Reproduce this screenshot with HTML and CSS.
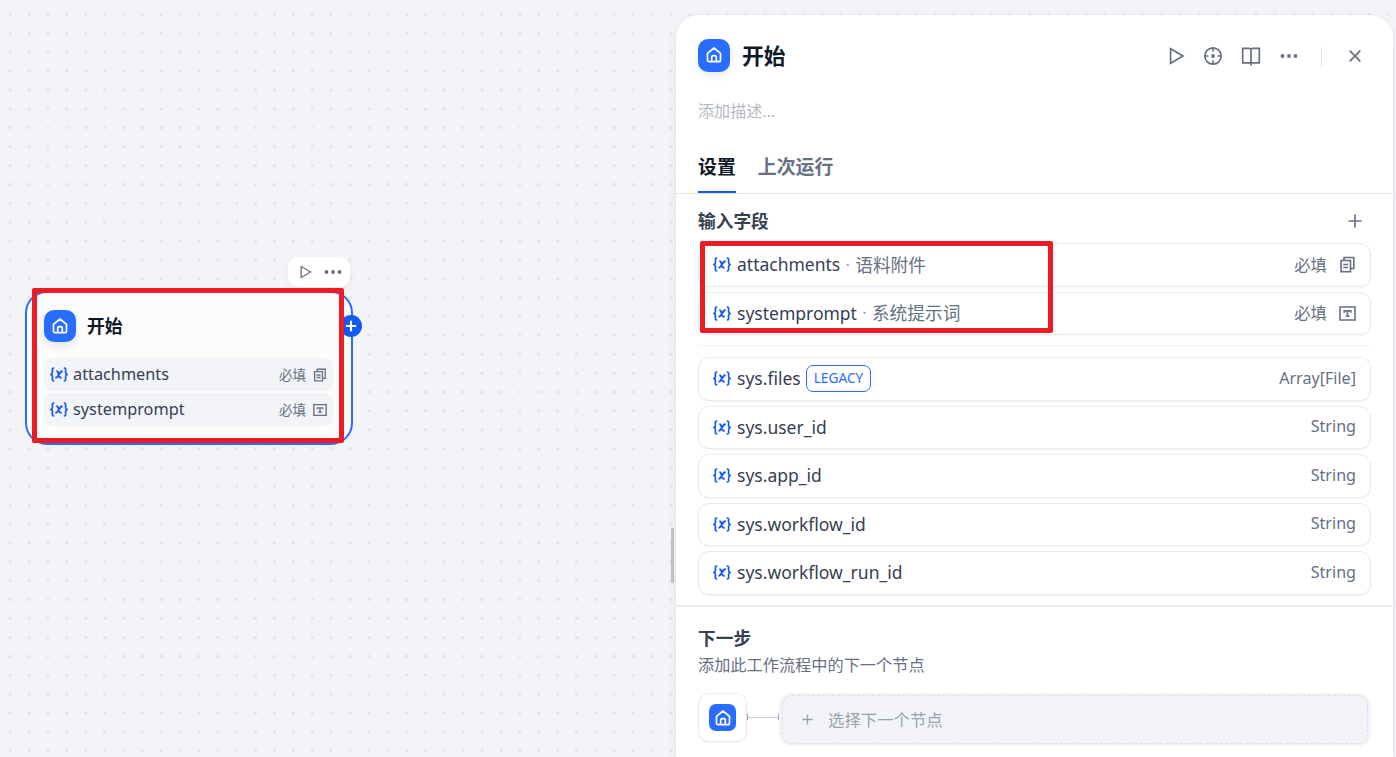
FILE: index.html
```html
<!DOCTYPE html>
<html lang="zh-CN">
<head>
    <meta charset="UTF-8">
    <title>开始</title>
    <link rel="stylesheet" href="styles.css">
</head>
<body>
    <!-- Shared icons -->
    <svg class="icon-defs" width="0" height="0">
        <symbol id="home" viewBox="0 0 16 16">
            <path d="M1.5 6.400 8 1l6.500 5.400v6.600a1.700 1.700 0 0 1-1.700 1.700H3.200a1.700 1.700 0 0 1-1.700-1.700zM5.700 14.500V10a1.300 1.300 0 0 1 1.300-1.300h2a1.300 1.300 0 0 1 1.300 1.300v4.500" fill="none" stroke="currentColor" stroke-width="1.700" stroke-linejoin="round"/>
        </symbol>
        <symbol id="var" viewBox="0 0 18 15">
            <path d="M4.300 1H3.700C2.800 1 2.400 1.500 2.400 2.300v3.200c0 1-.5 1.600-1.500 2 1 .4 1.500 1 1.500 2v3.200c0 .8.4 1.300 1.300 1.300h.6M13.700 1h.6c.9 0 1.300.5 1.300 1.300v3.200c0 1 .5 1.600 1.500 2-1 .4-1.500 1-1.500 2v3.200c0 .8-.4 1.300-1.300 1.300h-.6" fill="none" stroke="currentColor" stroke-width="1.700"/>
            <path d="M6.300 4.300h.4c.8 0 1.100.3 1.300 1l1.300 4.300c.2.800.6 1.100 1.300 1.100h1M12.700 4.300h-.2c-.9 0-1.500.3-2.100 1.100L7.700 9.500c-.6.900-1.200 1.200-2.100 1.200h-.2" fill="none" stroke="currentColor" stroke-width="1.900"/>
        </symbol>
        <symbol id="play" viewBox="0 0 16 18">
            <path d="M1.600 1.700v14.600L14 9z" fill="none" stroke="currentColor" stroke-width="1.700"/>
        </symbol>
        <symbol id="more" viewBox="0 0 18 6">
            <circle cx="2.500" cy="3" r="1.900" fill="currentColor"/>
            <circle cx="9" cy="3" r="1.900" fill="currentColor"/>
            <circle cx="15.500" cy="3" r="1.900" fill="currentColor"/>
        </symbol>
        <symbol id="plus" viewBox="0 0 14 14">
            <path d="M7 .5v13M.5 7h13" fill="none" stroke="currentColor" stroke-width="1.700"/>
        </symbol>
        <symbol id="plus-bold" viewBox="0 0 14 14">
            <path d="M7 1v12M1 7h12" fill="none" stroke="currentColor" stroke-width="2.500"/>
        </symbol>
        <symbol id="files" viewBox="0 0 16 17">
            <path d="M1.500 4.500h9.500v11.200H1.500zM4.500 4.500v-3h9.800v11H11M3.800 8.500h4.900M3.800 11.500h4.900" fill="none" stroke="currentColor" stroke-width="1.600"/>
        </symbol>
        <symbol id="text" viewBox="0 0 17 16">
            <path d="M1 1.500h15v13H1zM5.200 7.200V5.400h6.600v1.800M8.500 5.400v5.300M6.600 10.700h3.800" fill="none" stroke="currentColor" stroke-width="1.600"/>
        </symbol>
    </svg>

    <div class="workflow">
        <!-- Canvas -->
        <div class="canvas">
            <div class="node-toolbar">
                <svg class="tool-play"><use href="#play"/></svg>
                <svg class="tool-more"><use href="#more"/></svg>
            </div>
            <div class="node">
                <div class="node-header">
                    <div class="block-icon"><svg><use href="#home"/></svg></div>
                    <div class="node-title">开始</div>
                </div>
                <div class="node-var">
                    <svg class="var-icon"><use href="#var"/></svg>
                    <span class="node-var-name">attachments</span>
                    <span class="node-required">必填</span>
                    <svg class="type-icon"><use href="#files"/></svg>
                </div>
                <div class="node-var">
                    <svg class="var-icon"><use href="#var"/></svg>
                    <span class="node-var-name">systemprompt</span>
                    <span class="node-required">必填</span>
                    <svg class="type-icon"><use href="#text"/></svg>
                </div>
                <div class="node-handle"><svg><use href="#plus-bold"/></svg></div>
            </div>
            <div class="mark mark-node"></div>
            <div class="resize-bar"></div>
        </div>

        <!-- Settings panel -->
        <div class="panel">
            <div class="panel-header">
                <div class="block-icon"><svg><use href="#home"/></svg></div>
                <div class="panel-title">开始</div>
                <div class="panel-actions">
                    <svg class="act-play"><use href="#play"/></svg>
                    <svg class="act-target" viewBox="0 0 20 20">
                        <circle cx="10" cy="10" r="8.200" fill="none" stroke="currentColor" stroke-width="1.700"/>
                        <circle cx="10" cy="10" r="1.900" fill="currentColor"/>
                        <path d="M10 1.500v4M10 14.500v4M1.500 10h4M14.500 10h4" stroke="currentColor" stroke-width="1.700"/>
                    </svg>
                    <svg class="act-book" viewBox="0 0 20 20">
                        <path d="M10 3.500C9.700 2.700 9.200 2.300 8.300 2.300H1.700v14.500h16.600V2.300h-6.600c-.9 0-1.400.4-1.700 1.200zM10 3v16.500" fill="none" stroke="currentColor" stroke-width="1.700"/>
                    </svg>
                    <svg class="act-more"><use href="#more"/></svg>
                    <span class="act-divider"></span>
                    <svg class="act-close" viewBox="0 0 12 12">
                        <path d="M.7.7l10.600 10.600M11.300.7L.7 11.300" stroke="currentColor" stroke-width="1.700"/>
                    </svg>
                </div>
            </div>
            <div class="panel-desc">添加描述...</div>
            <div class="tabs">
                <div class="tab active">设置</div>
                <div class="tab">上次运行</div>
            </div>

            <div class="fields">
                <div class="fields-header">
                    <span>输入字段</span>
                    <svg class="add-icon"><use href="#plus"/></svg>
                </div>
                <div class="var-list">
                    <div class="var-row">
                        <svg class="var-icon"><use href="#var"/></svg>
                        <span class="var-name">attachments</span>
                        <span class="var-dot">·</span>
                        <span class="var-label">语料附件</span>
                        <span class="var-required">必填</span>
                        <svg class="type-icon"><use href="#files"/></svg>
                    </div>
                    <div class="var-row">
                        <svg class="var-icon"><use href="#var"/></svg>
                        <span class="var-name">systemprompt</span>
                        <span class="var-dot">·</span>
                        <span class="var-label">系统提示词</span>
                        <span class="var-required">必填</span>
                        <svg class="type-icon"><use href="#text"/></svg>
                    </div>
                    <div class="mark mark-fields"></div>
                </div>
                <div class="list-divider"></div>
                <div class="var-list">
                    <div class="var-row">
                        <svg class="var-icon"><use href="#var"/></svg>
                        <span class="var-name">sys.files</span>
                        <span class="badge">LEGACY</span>
                        <span class="var-type">Array[File]</span>
                    </div>
                    <div class="var-row">
                        <svg class="var-icon"><use href="#var"/></svg>
                        <span class="var-name">sys.user_id</span>
                        <span class="var-type">String</span>
                    </div>
                    <div class="var-row">
                        <svg class="var-icon"><use href="#var"/></svg>
                        <span class="var-name">sys.app_id</span>
                        <span class="var-type">String</span>
                    </div>
                    <div class="var-row">
                        <svg class="var-icon"><use href="#var"/></svg>
                        <span class="var-name">sys.workflow_id</span>
                        <span class="var-type">String</span>
                    </div>
                    <div class="var-row">
                        <svg class="var-icon"><use href="#var"/></svg>
                        <span class="var-name">sys.workflow_run_id</span>
                        <span class="var-type">String</span>
                    </div>
                </div>
            </div>

            <div class="next">
                <div class="next-title">下一步</div>
                <div class="next-desc">添加此工作流程中的下一个节点</div>
                <div class="next-row">
                    <div class="next-current">
                        <div class="block-icon small"><svg><use href="#home"/></svg></div>
                    </div>
                    <div class="next-line"></div>
                    <div class="next-add">
                        <div class="next-add-inner">
                            <svg><use href="#plus"/></svg>
                            <span>选择下一个节点</span>
                        </div>
                    </div>
                </div>
            </div>
        </div>
    </div>
</body>
</html>
```
FILE: styles.css
```css
* {
    box-sizing: border-box;
}
body {
    margin: 0;
    height: 757px;
    overflow: hidden;
    background: #f2f4f8;
    font-family: "Noto Sans", "Noto Sans CJK SC", sans-serif;
    color: #354052;
}
svg {
    display: block;
    flex: none;
}
.icon-defs {
    position: absolute;
}
.workflow {
    display: flex;
    height: 757px;
    padding-right: 3px;
    background-image: radial-gradient(circle, #e1e3e8 1.2px, transparent 1.9px);
    background-size: 18.88px 18.88px;
    background-position: 0.8px 5.1px;
}
.canvas {
    position: relative;
    width: 676px;
    flex: none;
}

/* Node on the canvas */
.node-toolbar {
    position: absolute;
    left: 288px;
    top: 257px;
    width: 62px;
    height: 30px;
    display: flex;
    align-items: center;
    padding-left: 12px;
    background: #fff;
    border-radius: 10px;
    box-shadow: 0 2px 6px rgba(16, 24, 40, 0.06);
    color: #676f83;
}
.tool-play {
    width: 12px;
    height: 14px;
    margin-right: 12px;
}
.tool-more {
    width: 18px;
    height: 6px;
}
.node {
    position: absolute;
    left: 25px;
    top: 291px;
    width: 328px;
    height: 154px;
    padding: 17px 18px;
    background: #fcfcfd;
    border: 2px solid #296dff;
    border-radius: 22px;
}
.node-header {
    display: flex;
    align-items: center;
    height: 32px;
    margin: 0 0 16px -1px;
}
.block-icon {
    display: flex;
    flex: none;
    align-items: center;
    justify-content: center;
    width: 32px;
    height: 32px;
    border-radius: 10px;
    background: #296dff;
    color: #fff;
    box-shadow: 0 4px 8px rgba(16, 24, 40, 0.09);
}
.block-icon svg {
    width: 16px;
    height: 16px;
}
.node-title {
    margin-left: 11px;
    padding-bottom: 2px;
    font-size: 17.8px;
    font-weight: 700;
    color: #101828;
}
.node-var {
    display: flex;
    align-items: center;
    width: 289px;
    height: 33px;
    margin: 0 0 2px -1px;
    padding: 0 6px;
    background: #f2f4f7;
    border-radius: 8px;
}
.var-icon {
    width: 18px;
    height: 15px;
    color: #155aef;
}
.node-var-name {
    margin-left: 5px;
    padding-bottom: 2px;
    font-size: 16.3px;
}
.node-required {
    margin-left: auto;
    margin-right: 7px;
    padding-bottom: 2px;
    font-size: 13.5px;
    color: #676f83;
}
.node .type-icon {
    width: 14px;
    height: 14px;
}
.type-icon {
    color: #676f83;
}
.node-handle {
    position: absolute;
    right: -11px;
    top: 22px;
    display: flex;
    align-items: center;
    justify-content: center;
    width: 22px;
    height: 22px;
    border-radius: 50%;
    background: #155aef;
    color: #fff;
}
.node-handle svg {
    width: 12px;
    height: 12px;
}

/* Red highlight frames */
.mark {
    position: absolute;
    border: 5px solid #ed1c24;
    border-radius: 2px;
}
.mark-node {
    left: 32px;
    top: 288px;
    width: 312px;
    height: 155px;
}
.mark-fields {
    left: 2px;
    top: -2px;
    width: 353px;
    height: 92px;
}
.resize-bar {
    position: absolute;
    right: 2px;
    top: 528px;
    width: 3px;
    height: 55px;
    border-radius: 2px;
    background: #bbc0cb;
}

/* Panel */
.panel {
    flex: 1;
    height: 742px;
    margin-top: 15px;
    background: #fff;
    border-radius: 22px 22px 0 0;
    box-shadow: 0 0 0 1px rgba(16, 24, 40, 0.03), 0 6px 12px rgba(16, 24, 40, 0.06);
}
.panel-header {
    display: flex;
    align-items: center;
    height: 33px;
    margin-top: 24px;
    padding: 0 32px 0 22px;
}
.panel-header .block-icon {
    height: 33px;
    padding-bottom: 1px;
}
.panel-title {
    margin-left: 12px;
    padding-top: 1px;
    font-size: 21.8px;
    line-height: 32px;
    font-weight: 700;
    color: #101828;
}
.panel-actions {
    display: flex;
    align-items: center;
    margin-left: auto;
    padding-top: 1px;
    color: #676f83;
}
.act-play {
    width: 16px;
    height: 18px;
}
.act-target {
    width: 20px;
    height: 20px;
    margin-left: 18px;
}
.act-book {
    width: 20px;
    height: 20px;
    margin-left: 18px;
}
.act-more {
    width: 18px;
    height: 6px;
    margin-left: 19px;
}
.act-divider {
    width: 1px;
    height: 19px;
    margin: 0 27px 0 23px;
    background: #e5e7eb;
}
.act-close {
    width: 12px;
    height: 12px;
}
.panel-desc {
    margin: 27px 0 0 22px;
    font-size: 16.1px;
    line-height: 24px;
    color: #b4b8c0;
}
.tabs {
    display: flex;
    gap: 22px;
    height: 71px;
    padding: 0 22px;
    border-bottom: 1px solid #e2e4e8;
}
.tab {
    padding-top: 30px;
    font-size: 18.9px;
    line-height: 28px;
    font-weight: 700;
    color: #676f83;
}
.tab.active {
    color: #101828;
    border-bottom: 2px solid #155aef;
}
.fields {
    height: 411px;
    padding: 13px 22px 0;
}
.fields-header {
    display: flex;
    align-items: center;
    justify-content: space-between;
    height: 28px;
    margin-bottom: 8px;
    padding-right: 9px;
    font-size: 17.7px;
    font-weight: 700;
}
.fields-header span {
    padding-bottom: 2px;
}
.add-icon {
    width: 14px;
    height: 14px;
    color: #676f83;
}
.var-list {
    position: relative;
    display: flex;
    flex-direction: column;
    gap: 5px;
}
.var-row {
    display: flex;
    align-items: center;
    height: 43.5px;
    padding: 0 14px;
    background: #fff;
    border: 1px solid #e9ebf0;
    border-radius: 11px;
    box-shadow: 0 1px 2px rgba(16, 24, 40, 0.05);
}
.var-name {
    margin-left: 6px;
    padding-bottom: 1px;
    font-size: 17.5px;
}
.var-dot {
    width: 15px;
    text-align: center;
    font-size: 16px;
    color: #98a2b2;
}
.var-label {
    padding-bottom: 2px;
    font-size: 17.7px;
    color: #676f83;
}
.var-required {
    margin-left: auto;
    margin-right: 12px;
    padding-bottom: 2px;
    font-size: 16.4px;
    color: #676f83;
}
.var-row .type-icon {
    width: 17px;
    height: 17px;
}
.badge {
    height: 27px;
    margin-left: 5px;
    padding: 0 7px;
    border: 1px solid #296dff;
    border-radius: 7px;
    font-size: 13.7px;
    line-height: 24px;
    color: #296dff;
}
.var-type {
    margin-left: auto;
    padding-bottom: 2px;
    font-size: 16.1px;
    color: #676f83;
}
.list-divider {
    height: 1px;
    margin: 10px 0 11px;
    background: #f2f3f5;
}

/* Next step */
.next {
    padding: 18px 22px 0;
    border-top: 2px solid #ebedf0;
}
.next-title {
    font-size: 17.7px;
    line-height: 27px;
    font-weight: 700;
}
.next-desc {
    font-size: 16.2px;
    line-height: 26px;
    color: #676f83;
}
.next-row {
    display: flex;
    margin-top: 15px;
}
.next-current {
    display: flex;
    align-items: center;
    justify-content: center;
    width: 49px;
    height: 49px;
    border: 1px solid #e9ebf0;
    border-radius: 11px;
    box-shadow: 0 1px 2px rgba(16, 24, 40, 0.05);
}
.block-icon.small {
    width: 27px;
    height: 27px;
    border-radius: 7px;
    box-shadow: none;
}
.next-line {
    width: 32px;
    height: 6px;
    margin-top: 21px;
    border: solid #98a2b2;
    border-width: 0 1px;
    background: linear-gradient(#c8ceda, #c8ceda) center / 100% 1px no-repeat;
}
.next-add {
    flex: 1;
    height: 53px;
    padding: 2px 3px;
    background: #f2f4f7;
    border-radius: 13px;
}
.next-add-inner {
    display: flex;
    align-items: center;
    height: 49px;
    padding-left: 19px;
    border: 1px dashed #dcdfe6;
    border-radius: 10px;
    font-size: 16.4px;
    color: #98a2b2;
}
.next-add-inner span {
    padding-bottom: 2px;
}
.next-add-inner svg {
    width: 11px;
    height: 11px;
    margin-right: 15px;
}
```
